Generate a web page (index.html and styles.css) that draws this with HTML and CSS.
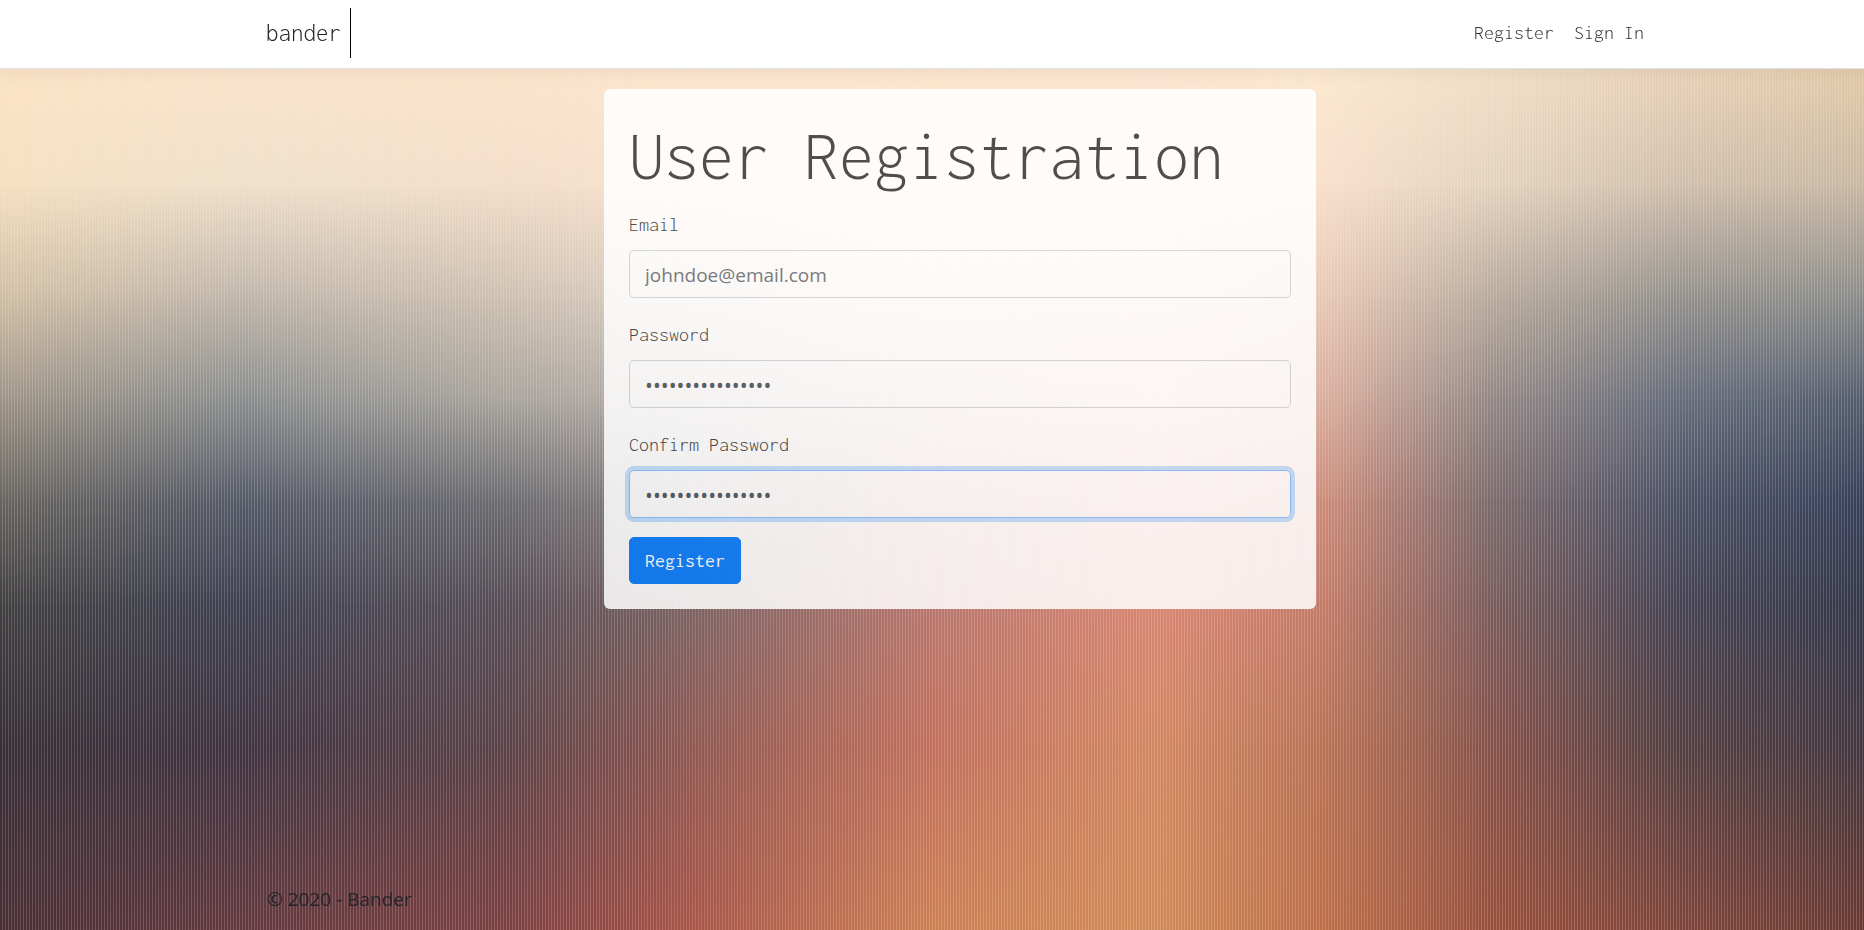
FILE: index.html
```
<!DOCTYPE html>
<html lang="en">
<head>
<meta charset="utf-8">
<meta name="viewport" content="width=device-width, initial-scale=1">
<title>Register - Bander</title>
<link rel="stylesheet" href="styles.css">
</head>
<body>
<div class="backdrop" aria-hidden="true">
  <div class="band band-1"></div>
  <div class="band band-2"></div>
  <div class="band band-3"></div>
  <div class="band band-4"></div>
  <div class="band band-5"></div>
  <div class="band band-6"></div>
  <div class="band band-7"></div>
  <div class="band band-8"></div>
  <div class="band stripes"></div>
</div>
<div class="page">
  <header class="navbar">
    <div class="container navbar-inner">
      <a class="brand" href="#">bander</a>
      <nav class="nav-links">
        <a class="nav-link" href="#">Register</a>
        <a class="nav-link" href="#">Sign In</a>
      </nav>
    </div>
  </header>
  <main class="container main">
    <form class="card">
      <h1 class="title">User Registration</h1>
      <div class="field">
        <label class="label" for="email">Email</label>
        <input class="input" id="email" type="email" placeholder="johndoe@email.com">
      </div>
      <div class="field">
        <label class="label" for="password">Password</label>
        <input class="input" id="password" type="password" value="correcthorse1234">
      </div>
      <div class="field">
        <label class="label" for="confirm">Confirm Password</label>
        <input class="input input-active" id="confirm" type="password" value="correcthorse1234">
      </div>
      <button class="button" type="button">Register</button>
    </form>
  </main>
  <footer class="container footer">© 2020 - Bander</footer>
</div>
</body>
</html>
```

FILE: styles.css
```
* { box-sizing: border-box; }

:root {
  --mono: Inconsolata, "Liberation Mono", monospace;
  --sans: "Segoe UI", "Open Sans", sans-serif;
}

body {
  margin: 0;
  overflow-x: hidden;
  font: 19px/30px var(--sans);
  color: #212529;
}

/* Each band is a horizontal blend that fades in below the one before it. */
.backdrop {
  position: fixed;
  inset: 0;
  z-index: -1;
}
.band {
  position: absolute;
  inset: 0;
  background: linear-gradient(90deg, var(--a), var(--b) 13%, var(--c) 27%, var(--d) 37%, var(--e) 50%, var(--f) 62%, var(--g) 71%, var(--h) 80%, var(--i) 90%, var(--j));
  mask-image: linear-gradient(transparent var(--from), #000 var(--to));
}
.band-1 { --a: #fce3c4; --b: #fce4ca; --c: #fde5cb; --d: #fde6cc; --e: #fde6cc; --f: #fde6d0; --g: #fde8cf; --h: #f3dfc6; --i: #ead2b8; --j: #e4cba9; mask-image: none; }
.band-2 { --a: #f6dfc0; --b: #efdfc9; --c: #f3ddc8; --d: #f8e0cc; --e: #fce2cc; --f: #fce2cc; --g: #f8dfcb; --h: #e4d2bd; --i: #d0beab; --j: #c8b7a2; --from: 7%; --to: 20%; }
.band-3 { --a: #d0bea4; --b: #bfb5a9; --c: #cdc0b0; --d: #dccfc2; --e: #f0d8c8; --f: #f4d6c6; --g: #e8c8b5; --h: #b8aa9c; --i: #94918d; --j: #8c8d8b; --from: 20%; --to: 32%; }
.band-4 { --a: #9e9487; --b: #8a8d8e; --c: #a8a39c; --d: #b5aca8; --e: #d8b8ac; --f: #ecbcae; --g: #daae9d; --h: #948886; --i: #666c7a; --j: #555d6d; --from: 32%; --to: 43%; }
.band-5 { --a: #68645f; --b: #555a67; --c: #6b6b70; --d: #8c8080; --e: #c08e86; --f: #dc968a; --g: #cd8c7b; --h: #7c6b6c; --i: #4c5165; --j: #38405a; --from: 43%; --to: 54%; }
.band-6 { --a: #424042; --b: #3f4150; --c: #574e57; --d: #7c6363; --e: #b8776e; --f: #da8672; --g: #c37c69; --h: #7a5c5c; --i: #464352; --j: #353849; --from: 54%; --to: 65%; }
.band-7 { --a: #372f36; --b: #3f3340; --c: #5a4248; --d: #8f5851; --e: #c2705d; --f: #d38862; --g: #b87355; --h: #87524a; --i: #533f42; --j: #433740; --from: 65%; --to: 80%; }
.band-8 { --a: #4a2e35; --b: #63393f; --c: #7c4041; --d: #a85448; --e: #cd8054; --f: #d08a58; --g: #bd6e48; --h: #98503c; --i: #80453a; --j: #693a32; --from: 80%; --to: 100%; }
.stripes {
  background: repeating-linear-gradient(90deg, transparent 0 2px, rgba(245, 245, 245, .18) 2px 3px);
  mask-image: none;
}

.page {
  display: flex;
  flex-direction: column;
  min-height: 100vh;
  margin-right: -56px;
}
.container {
  width: 100%;
  max-width: 1388px;
  margin: 0 auto;
}

.navbar {
  padding: 8px 0 10px;
  background: #fff;
  border-bottom: 1px solid #dee2e6;
  box-shadow: 0 5px 15px rgba(0, 0, 0, .05);
  font-family: var(--mono);
  font-weight: 300;
}
.navbar-inner {
  display: flex;
  align-items: center;
  justify-content: space-between;
}
.brand {
  padding-right: 9px;
  border-right: 1px solid #000;
  color: #222;
  font-size: 25px;
  line-height: 50px;
  text-decoration: none;
}
.nav-links {
  display: flex;
  gap: 20px;
  padding-right: 10px;
}
.nav-link {
  color: #333;
  font-size: 20px;
  text-decoration: none;
}

.main { padding-top: 20px; }
.card {
  max-width: 712px;
  margin: 0 auto;
  padding: 25px;
  border-radius: 6px;
  background: #fff;
  opacity: .85;
}
.title {
  margin: 0 0 12px;
  color: #333;
  font: 300 70px/84px var(--mono);
  white-space: nowrap;
}
.field { margin-bottom: 22px; }
.field:last-of-type { margin-bottom: 19px; }
.label {
  display: block;
  margin-bottom: 10px;
  color: #333;
  font: 300 20px/30px var(--mono);
}
.input {
  display: block;
  width: 100%;
  height: 48px;
  padding: 10px 15px 8px;
  border: 1px solid #ced4da;
  border-radius: 5px;
  outline: 0;
  background: transparent;
  color: #495057;
  font: 19px/28px var(--sans);
}
.input[type="password"] { font-size: 21px; }
.input::placeholder {
  color: #666b70;
  opacity: 1;
}
.input-active {
  border-color: #80bdff;
  box-shadow: 0 0 0 4px rgba(0, 123, 255, .25);
}
.button {
  display: block;
  padding: 8px 15px;
  border: 1px solid #007bff;
  border-radius: 5px;
  background: #007bff;
  color: #fff;
  font: 400 20px/29px var(--mono);
}

.footer {
  margin-top: auto;
  padding: 14px 1px 16px;
}
```
